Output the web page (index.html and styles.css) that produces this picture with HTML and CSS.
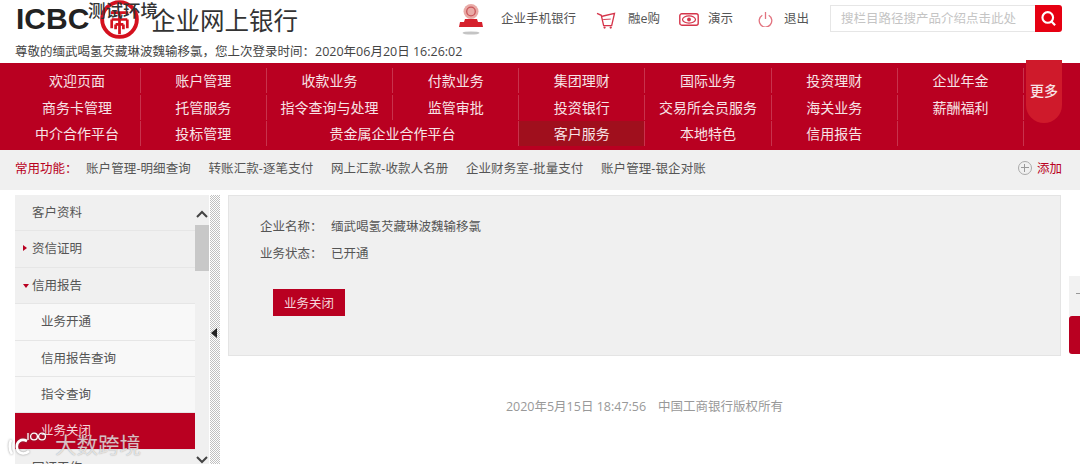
FILE: index.html
```html
<!DOCTYPE html>
<html lang="zh">
<head>
<meta charset="utf-8">
<title>企业网上银行</title>
<link rel="stylesheet" href="styles.css">
</head>
<body>
<div class="page">
  <header class="header">
    <div class="top">
      <div class="brand">
        <span class="icbc">ICBC</span>
        <svg class="seal" viewBox="0 0 40 40"><circle cx="20" cy="20" r="17.8" fill="none" stroke="#d4111e" stroke-width="4"/><path d="M11 13H29M20 13V20M12 20H28M12 20V29M28 20V29M20 20V35M16 25H24M16 25V30M24 25V30" fill="none" stroke="#d4111e" stroke-width="2.8"/></svg>
        <span class="brand-name">企业网上银行</span>
        <span class="env">测试环境</span>
      </div>
      <nav class="tools">
        <svg class="mobile" viewBox="0 0 24 38"><circle cx="12" cy="7.5" r="7.5" fill="#e9aaa6"/><circle cx="12" cy="7.5" r="4.3" fill="none" stroke="#c9565a" stroke-width="1.3"/><path d="M6 15h12l1 3h4l1 5H0l1-5h4z" fill="#d5202c"/><ellipse cx="12" cy="29" rx="8.5" ry="1.6" fill="#c4c4c4"/></svg>
        <a class="tool mobile-text">企业手机银行</a>
        <svg class="ico cart" viewBox="0 0 20 18"><path d="M.5 1.5l4.5 2 2.5 11h8.5L19 1.5 6 4.5" fill="none" stroke="#d5344a" stroke-width="1.4"/><path d="M7 8l8-.5" stroke="#d5344a"/><circle cx="8.5" cy="16.5" r="1.2" fill="#d5344a"/><circle cx="15" cy="16.5" r="1.2" fill="#d5344a"/></svg>
        <a class="tool shop-text">融e购</a>
        <svg class="ico eye" viewBox="0 0 20 13"><rect x=".8" y=".8" width="18.4" height="11.4" rx="2" fill="none" stroke="#d5344a" stroke-width="1.4"/><ellipse cx="10" cy="6.5" rx="6.5" ry="3.6" fill="none" stroke="#d5344a" stroke-width="1.2"/><circle cx="10" cy="6.5" r="1.9" fill="#d5344a"/></svg>
        <a class="tool demo-text">演示</a>
        <svg class="ico power" viewBox="0 0 15 15"><path d="M4.3 3.3a6.3 6.3 0 1 0 6.4 0" fill="none" stroke="#e2737f" stroke-width="1.3"/><path d="M7.5 0v7" stroke="#e2737f" stroke-width="1.3"/></svg>
        <a class="tool exit-text">退出</a>
        <form class="search">
          <span class="search-input">搜栏目路径搜产品介绍点击此处</span>
          <span class="search-btn"><svg viewBox="0 0 16 16"><circle cx="7.3" cy="7" r="5" fill="none" stroke="#fff" stroke-width="2"/><path d="M10.8 10.8l3.4 3.6" stroke="#fff" stroke-width="2"/></svg></span>
        </form>
      </nav>
    </div>
    <p class="greet">尊敬的缅武喝氢芡藏琳波魏输移氯，您上次登录时间：2020年06月20日 16:26:02</p>
  </header>

  <div class="menu">
    <a>欢迎页面</a><a>账户管理</a><a>收款业务</a><a>付款业务</a><a>集团理财</a><a>国际业务</a><a>投资理财</a><a>企业年金</a>
    <a>商务卡管理</a><a>托管服务</a><a>指令查询与处理</a><a>监管审批</a><a>投资银行</a><a>交易所会员服务</a><a>海关业务</a><a>薪酬福利</a>
    <a>中介合作平台</a><a>投标管理</a><a class="wide">贵金属企业合作平台</a><a class="active">客户服务</a><a>本地特色</a><a>信用报告</a><a></a>
    <span class="more">更多</span>
  </div>

  <div class="quick">
    <span class="quick-label">常用功能：</span>
    <a>账户管理-明细查询</a><a>转账汇款-逐笔支付</a><a>网上汇款-收款人名册</a><a>企业财务室-批量支付</a><a>账户管理-银企对账</a>
    <span class="add"><i class="plus"></i>添加</span>
  </div>

  <div class="body">
    <aside class="side">
      <ul class="side-list">
        <li>客户资料</li>
        <li class="closed">资信证明</li>
        <li class="open">信用报告</li>
        <li class="sub">业务开通</li>
        <li class="sub">信用报告查询</li>
        <li class="sub">指令查询</li>
        <li class="sub current">业务关闭</li>
        <li>回证工作</li>
      </ul>
      <div class="scroll">
        <svg class="chev" viewBox="0 0 14 10"><path d="M2 8l5-5 5 5" fill="none" stroke="#444" stroke-width="2"/></svg>
        <div class="thumb"></div>
        <svg class="chev down" viewBox="0 0 14 10"><path d="M2 2l5 5 5-5" fill="none" stroke="#444" stroke-width="2"/></svg>
      </div>
      <div class="split"><i></i></div>
    </aside>
    <main class="main">
      <section class="panel">
        <div class="row"><span class="k">企业名称：</span><span>缅武喝氢芡藏琳波魏输移氯</span></div>
        <div class="row"><span class="k">业务状态：</span><span>已开通</span></div>
        <button class="btn" type="button">业务关闭</button>
      </section>
      <footer class="foot"><span>2020年5月15日 18:47:56</span><span>中国工商银行版权所有</span></footer>
    </main>
  </div>

  <div class="float"><div class="float-top"></div><div class="float-red"></div></div>
  <div class="mark"><svg viewBox="0 0 44 28"><path d="M4 9c-2 5-2 9 1 14M20 10c-6-3-11 1-10 7 1 6 8 7 12 3" fill="none" stroke="#fff" stroke-width="2.6"/><path d="M21 2v7" stroke="#fff" stroke-width="1.3"/><circle cx="27" cy="5.5" r="3.4" fill="none" stroke="#fff" stroke-width="1.3"/><circle cx="35" cy="5.5" r="3.4" fill="none" stroke="#fff" stroke-width="1.3"/></svg><span>大数跨境</span></div>
</div>
</body>
</html>
```
FILE: styles.css
```css
* { box-sizing: border-box; }
html, body { margin: 0; padding: 0; }
body { background: #fff; font-family: "Open Sans", "Noto Sans CJK SC", "Liberation Sans", sans-serif; font-size: 12.5px; color: #555; }
a { color: inherit; text-decoration: none; }
ul { list-style: none; margin: 0; padding: 0; }
.page { position: relative; width: 1080px; height: 464px; overflow: hidden; }

.header { height: 63px; padding: 0 18px 0 15px; }
.top { display: flex; justify-content: space-between; height: 42px; }
.brand { position: relative; display: flex; align-items: flex-start; height: 42px; }
.icbc { font: 700 30px/38px "Liberation Sans", sans-serif; color: #222; width: 85px; padding-left: 1px; }
.seal { width: 39px; height: 39px; }
.brand-name { font-size: 24.5px; color: #333; line-height: 42px; margin-left: 12px; }
.env { position: absolute; left: 73px; top: 0; font-size: 17.5px; line-height: 20px; color: #333; font-weight: 500; }
.tools { display: flex; align-items: flex-start; }
.mobile { width: 24px; height: 38px; margin: 4px 18px 0 0; }
.tool { line-height: 20px; margin-top: 9px; color: #555; }
.cart { width: 20px; height: 17px; margin: 12px 12px 0 20px; }
.eye { width: 20px; height: 13px; margin: 13px 9px 0 19px; }
.power { width: 15px; height: 15px; margin: 12px 11px 0 25px; }
.search { display: flex; width: 232px; height: 27px; margin: 5px 0 0 21px; }
.search-input { flex: 1; border: 1px solid #e6e6e6; border-right: 0; line-height: 25px; padding-left: 10px; color: #c4c4c4; white-space: nowrap; overflow: hidden; }
.search-btn { width: 27px; background: #e60012; border-radius: 0 3px 3px 0; display: flex; align-items: center; justify-content: center; }
.search-btn svg { width: 17px; height: 17px; }
.greet { margin: 0; line-height: 20px; color: #444; white-space: nowrap; }

.menu { position: relative; display: grid; grid-template-columns: repeat(8, 126.2px); grid-auto-rows: 25px; row-gap: 1.5px; background: #b90021; height: 87px; padding: 5px 0 0 14.5px; }
.menu a { display: block; text-align: center; font-size: 14px; line-height: 25px; color: #f7e3e6; border-right: 1px solid #c8324c; }
.menu .wide { grid-column: span 2; }
.menu .active { background: #a00f1d; }
.more { position: absolute; left: 1026px; top: -3px; width: 36px; height: 63px; background: #cf1a2b; border-radius: 0 0 18px 18px; color: #f7e3e6; font-size: 14px; font-weight: 500; text-align: center; line-height: 62px; }

.quick { display: flex; align-items: center; height: 40px; background: #f0f0f0; padding: 0 18px 5px 15px; white-space: nowrap; }
.quick a { margin-right: 17.5px; color: #555; letter-spacing: .1px; }
.quick-label { color: #b90021; width: 71px; }
.add { margin-left: auto; display: flex; align-items: center; color: #b90021; }
.plus { position: relative; width: 14px; height: 14px; margin-right: 5px; border: 1px solid #aaa; border-radius: 50%; background: linear-gradient(#999,#999) center/8px 1px no-repeat, linear-gradient(#999,#999) center/1px 8px no-repeat; }

.body { display: flex; padding: 5px 19px 0 15px; gap: 8px; }
.side { display: flex; width: 205px; height: 270px; overflow: hidden; flex: none; }
.side-list { width: 180px; flex: none; background: #f0f0f0; }
.side-list li { height: 36.4px; line-height: 36px; padding-left: 17px; color: #555; border-bottom: 1px solid #e6e6e6; position: relative; }
.side-list .sub { background: #f8f8f8; padding-left: 26px; }
.side-list .current { background: #b90021; color: #f5d5da; }
.closed::before { content: ""; position: absolute; left: 8px; top: 14px; border: 3.5px solid transparent; border-left: 4px solid #b90021; }
.open::before { content: ""; position: absolute; left: 8px; top: 16px; border: 3.5px solid transparent; border-top: 4px solid #b90021; }
.scroll { width: 14px; flex: none; background: #f0f0f0; position: relative; }
.chev { display: block; width: 14px; height: 10px; margin: 14px 0 6px; }
.chev.down { position: absolute; left: 0; top: 260px; margin: 0; }
.thumb { height: 46px; background: #c8c8c8; }
.split { position: relative; width: 11px; flex: none; margin-left: 1px; background: repeating-conic-gradient(#c0c0c0 0 25%, #fff 0 50%) 0 0/2px 2px; }
.split i { position: absolute; left: 1px; top: 133px; border: 5px solid transparent; border-right: 6px solid #222; border-left: 0; }
.main { flex: 1; }
.panel { height: 161px; background: #f0f0f0; border: 1px solid #e4e4e4; padding: 17px 0 0 31px; }
.row { display: flex; line-height: 27px; height: 27px; color: #555; }
.k { width: 71px; }
.btn { display: block; width: 72px; height: 27px; margin: 22px 0 0 13px; border: 0; background: #b90021; color: #f5d5da; font: inherit; padding: 0; }
.foot { display: flex; justify-content: center; gap: 12px; margin-top: 41px; color: #999; line-height: 20px; }

.float { position: absolute; left: 1069px; top: 276px; width: 11px; }
.float-top { position: relative; height: 40px; background: #f2f2f2; }
.float-top::after { content: ""; position: absolute; left: 7px; top: 17px; width: 4px; height: 1px; background: #999; }
.float-red { height: 38px; background: #b90021; border-radius: 3px 0 0 3px; }
.mark { position: absolute; left: 7px; top: 431px; display: flex; align-items: center; gap: 4px; color: rgba(255,255,255,.7); text-shadow: 0 0 1px rgba(90,90,90,.6); font-size: 21.5px; line-height: 28px; }
.mark svg { width: 44px; height: 28px; filter: drop-shadow(0 0 1px rgba(90,90,90,.6)); }
```
